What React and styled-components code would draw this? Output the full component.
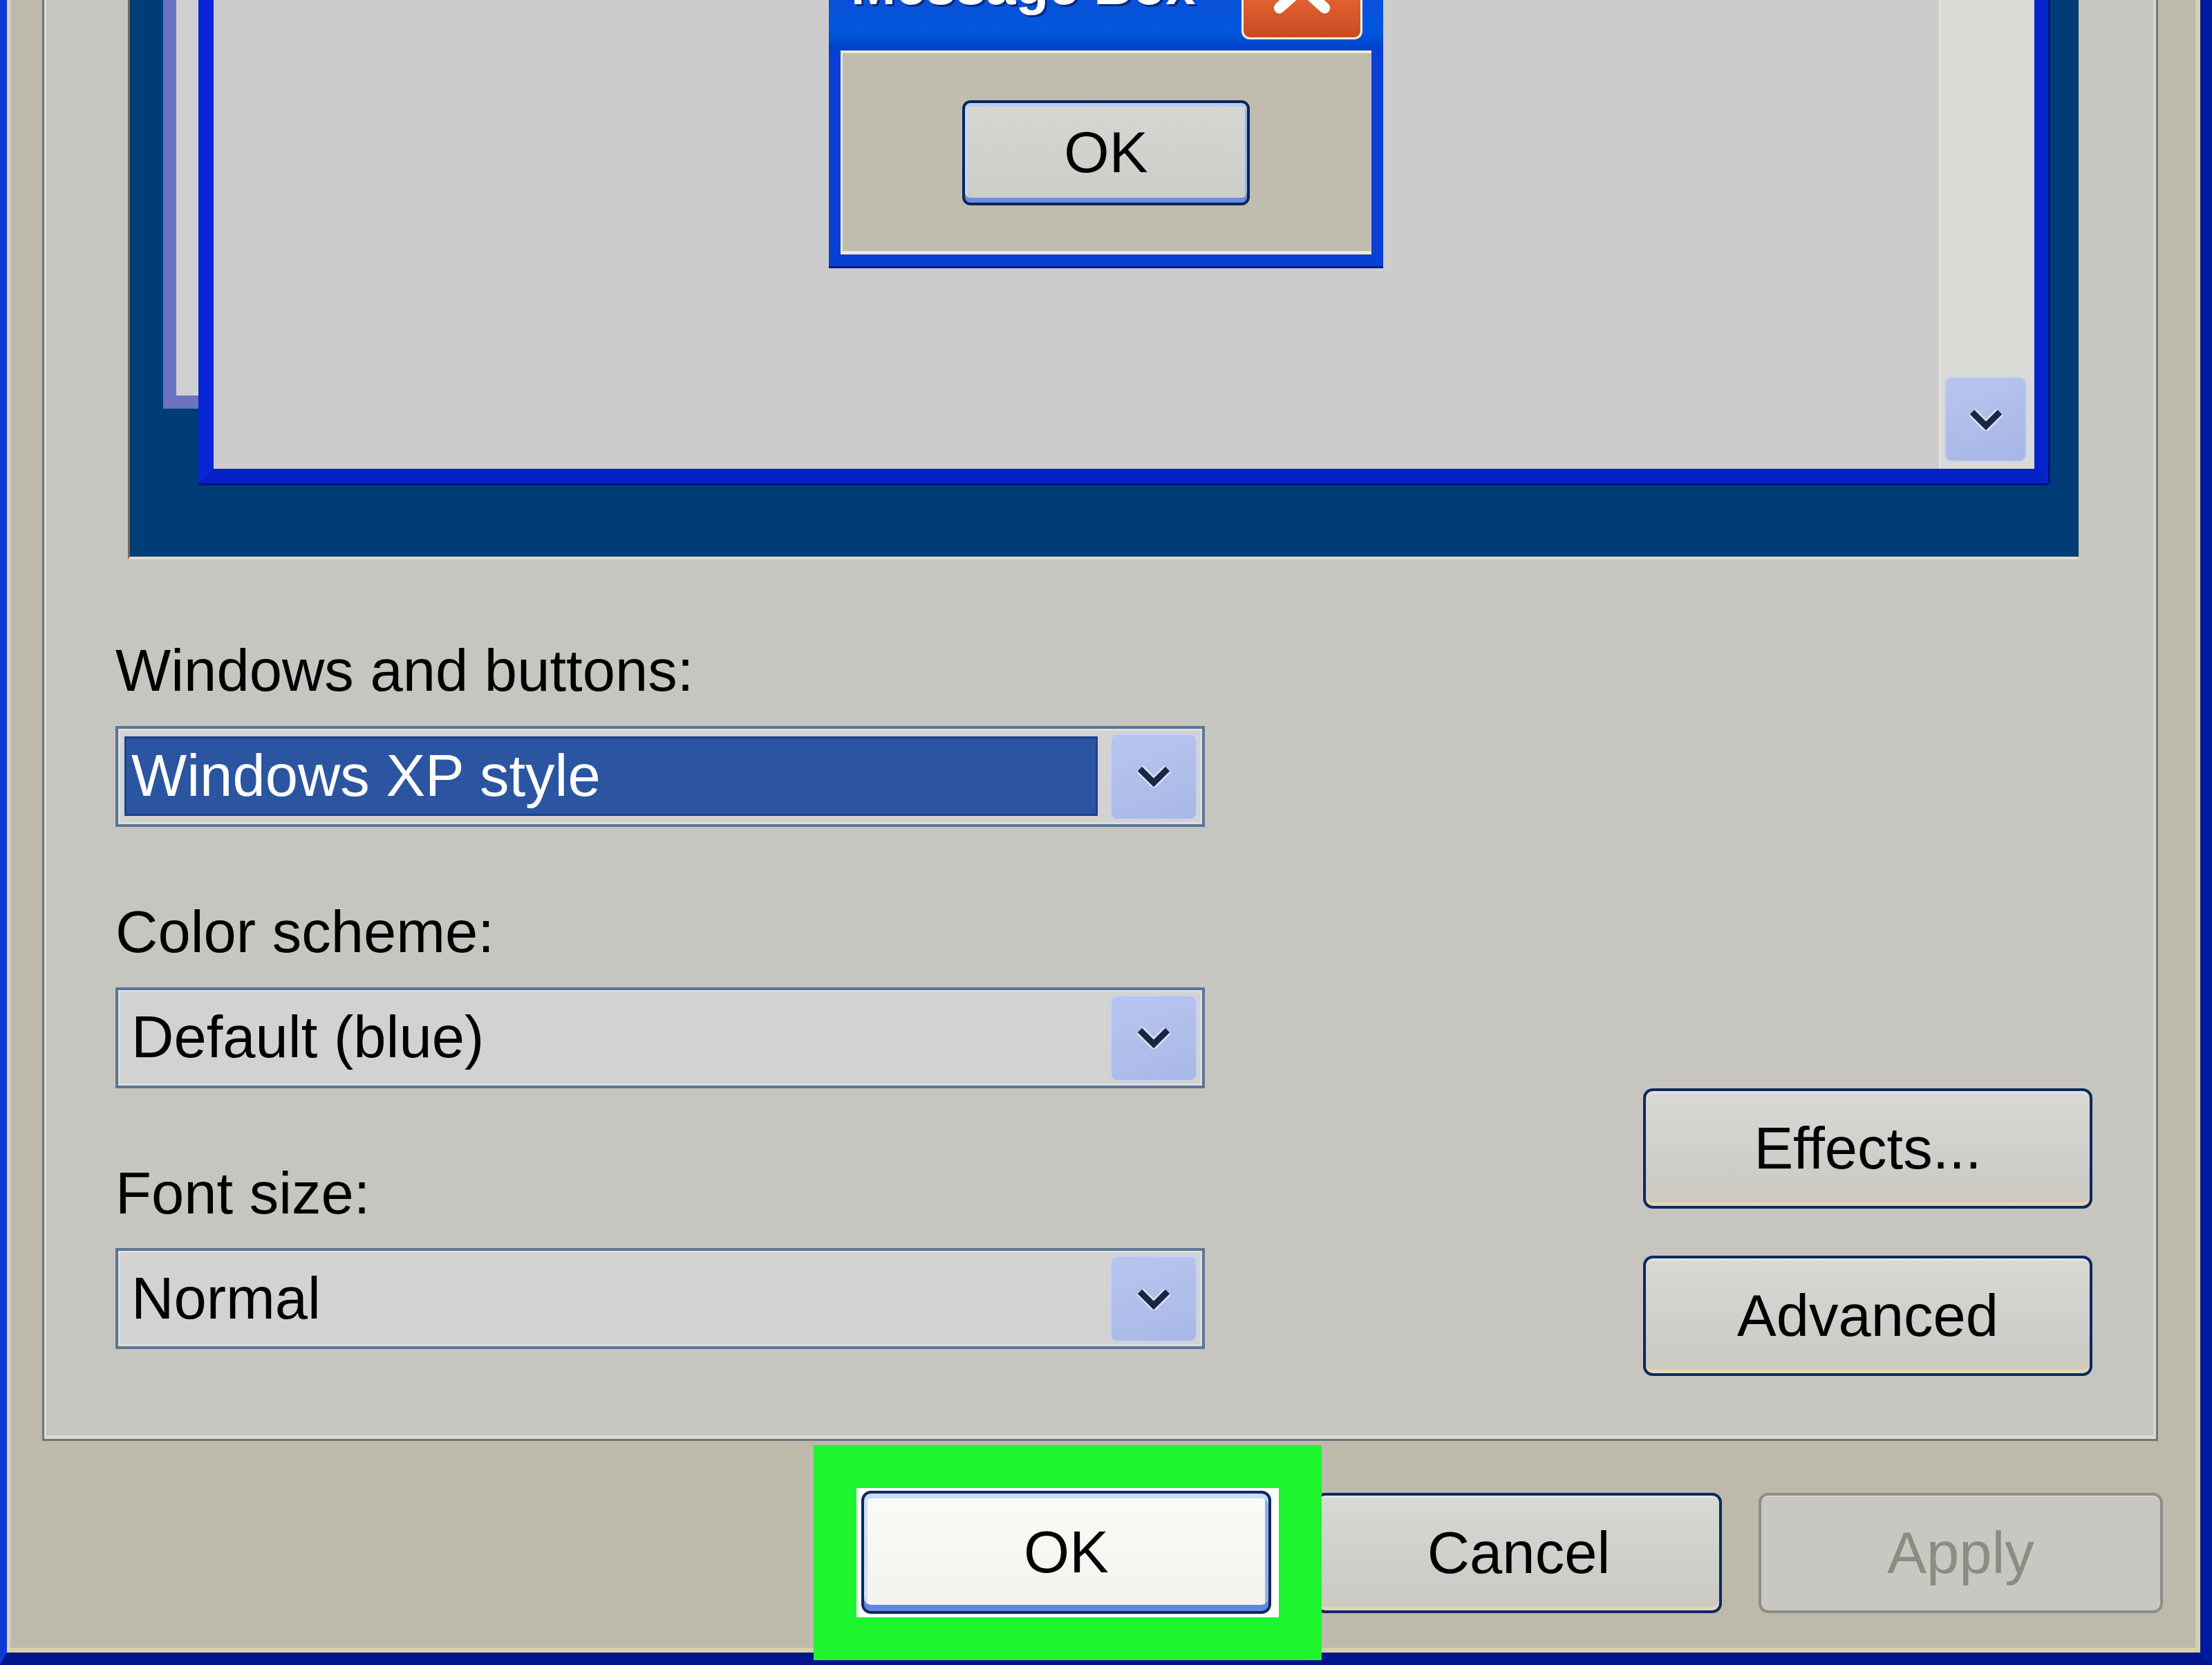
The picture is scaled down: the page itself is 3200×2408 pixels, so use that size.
import React from 'react'
import styled, { createGlobalStyle } from 'styled-components'

const Global = createGlobalStyle`
html, body {
	margin: 0;
	padding: 0;
	overflow: hidden;
	background: #0b3bd0;
}
* { box-sizing: border-box; }
`

const FONT = `"Liberation Sans", Arial, sans-serif`

const Chevron = () => (
	<svg width="50" height="32" viewBox="0 0 50 32">
		<polyline points="5,5 25,25 45,5" fill="none" stroke="#eef2ff" strokeOpacity="0.7" strokeWidth="14" strokeLinejoin="miter" />
		<polyline points="5,5 25,25 45,5" fill="none" stroke="#1a2646" strokeWidth="9" strokeLinejoin="miter" />
	</svg>
)

const App = () => {
	return (
		<>
			<Global />
			<Frame>
				<Body>
					<Panel>
						<Preview>
							<BackWindow />
							<MainWindow>
								<WindowContent>
									<MessageBox>
										<TitleBar>
											<Title>Message Box</Title>
											<CloseBtn>
												<svg width="100%" height="100%" viewBox="0 0 175 57">
													<line x1="40" y1="-62" x2="122" y2="12" stroke="#fff" strokeWidth="17" strokeLinecap="round" />
													<line x1="135" y1="-62" x2="53" y2="12" stroke="#fff" strokeWidth="17" strokeLinecap="round" />
												</svg>
											</CloseBtn>
										</TitleBar>
										<MessageBody>
											<SmallButton>OK</SmallButton>
										</MessageBody>
									</MessageBox>
								</WindowContent>
								<ScrollTrack>
									<ScrollButton><Chevron /></ScrollButton>
								</ScrollTrack>
							</MainWindow>
						</Preview>
						<Controls>
							<Fields>
								<Group>
									<Label>Windows and buttons:</Label>
									<Combo>
										<Field selected>Windows XP style</Field>
										<DropButton><Chevron /></DropButton>
									</Combo>
								</Group>
								<Group>
									<Label>Color scheme:</Label>
									<Combo>
										<Field>Default (blue)</Field>
										<DropButton><Chevron /></DropButton>
									</Combo>
								</Group>
								<Group>
									<Label>Font size:</Label>
									<Combo>
										<Field>Normal</Field>
										<DropButton><Chevron /></DropButton>
									</Combo>
								</Group>
							</Fields>
							<SideButtons>
								<XPButton>Effects...</XPButton>
								<XPButton>Advanced</XPButton>
							</SideButtons>
						</Controls>
					</Panel>
					<Footer>
						<Highlight>
							<XPButton primary>OK</XPButton>
						</Highlight>
						<XPButton width={588}>Cancel</XPButton>
						<XPButton disabled width={585}>Apply</XPButton>
					</Footer>
				</Body>
			</Frame>
		</>
	)
}

const Frame = styled.div`
width: 3200px;
height: 2408px;
border-left: 10px solid #0b3bd0;
border-right: 17px solid #001c9e;
border-bottom: 18px solid #00168a;
font-family: ${FONT};
`

const Body = styled.div`
height: 100%;
background: #bdb9ab;
box-shadow: inset 5px 0 0 #d9d5b8, inset -7px 0 0 #d6d1ac, inset 0 -7px 0 #d6d1ac;
display: flex;
flex-direction: column;
`

const Panel = styled.div`
margin: 0 61px 0 51px;
background: #c6c5c0;
border-left: 3px solid #6f767b;
border-right: 3px solid #6f767b;
border-bottom: 3px solid #6f767b;
box-shadow: inset 0 -5px 0 #d9d9d4, inset -4px 0 0 #d9d9d4, inset 3px 0 0 #dcdcd6;
`

const Preview = styled.div`
margin: 0 112px 0 121px;
height: 809px;
background: #003c78;
border-left: 3px solid #7a6a4e;
border-bottom: 4px solid #dddbd2;
display: flex;
align-items: flex-start;
padding-right: 44px;
`

const BackWindow = styled.div`
margin-left: 48px;
width: 51px;
height: 591px;
background: #d0d0d0;
border-left: 19px solid #6a72c2;
border-bottom: 19px solid #6a72c2;
`

const MainWindow = styled.div`
flex: 1;
height: 699px;
display: flex;
border-left: 22px solid #0726d6;
border-right: 20px solid #0524cc;
border-bottom: 21px solid #0420c6;
box-shadow: 0 3px 0 #00107a, 3px 0 0 #00107a;
`

const WindowContent = styled.div`
flex: 1;
background: #cccccc;
padding-left: 890px;
`

const MessageBox = styled.div`
width: 802px;
border: 17px solid #0a3fd4;
border-top: 0;
box-shadow: 0 3px 0 #001a8a;
`

const TitleBar = styled.div`
height: 73px;
margin: 0 -17px;
padding: 0 30px 0 32px;
background: linear-gradient(180deg, #0a50d8 0%, #0058dc 60%, #0040c8 100%);
display: flex;
align-items: flex-start;
justify-content: space-between;
overflow: hidden;
`

const Title = styled.div`
color: #fff;
font-weight: bold;
font-size: 78px;
line-height: 1;
margin-top: -60px;
text-shadow: 3px 3px 0 #0a2a80;
white-space: nowrap;
`

const CloseBtn = styled.div`
width: 175px;
height: 57px;
background: linear-gradient(180deg, #e06030 0%, #c84c22 100%);
border: 3px solid #f4f0e8;
border-top: 0;
border-radius: 0 0 12px 12px;
overflow: hidden;
`

const MessageBody = styled.div`
height: 295px;
background: #c0bdb0;
box-shadow: inset 0 4px 0 #ede9d2, inset 0 -5px 0 #ede9d2, inset 3px 0 0 #ede9d2;
display: flex;
align-items: center;
justify-content: center;
`

const SmallButton = styled.div`
width: 416px;
height: 152px;
border: 4px solid #0b2457;
border-radius: 12px;
background: linear-gradient(180deg, #d6d6d2 0%, #ccccc8 100%);
box-shadow: inset 0 5px 0 #b4ccf2, inset 0 -7px 0 #6a8ce4, inset 3px 0 0 #c6d8f4, inset -3px 0 0 #9ab4ec;
display: flex;
align-items: center;
justify-content: center;
font-size: 84px;
color: #000;
`

const ScrollTrack = styled.div`
width: 138px;
background: #d9d9d5;
border-left: 2px solid #e6e6e2;
display: flex;
flex-direction: column;
justify-content: flex-end;
padding: 0 0 10px 6px;
`

const ScrollButton = styled.div`
width: 119px;
height: 123px;
border-radius: 10px;
background: linear-gradient(160deg, #b8c6ee 0%, #a6b6e4 100%);
border: 2px solid #c4d0f2;
display: flex;
align-items: center;
justify-content: center;
`

const Controls = styled.div`
display: flex;
justify-content: space-between;
align-items: flex-start;
padding: 112px 92px 91px 103px;
`

const Fields = styled.div`
width: 1576px;
display: flex;
flex-direction: column;
gap: 103px;
`

const Group = styled.div`
display: flex;
flex-direction: column;
gap: 31px;
`

const Label = styled.div`
font-size: 85px;
line-height: 1.15;
color: #000;
white-space: nowrap;
`

const Combo = styled.div`
height: 146px;
border: 4px solid #5a7596;
background: #d2d2d0;
box-shadow: inset 0 0 0 3px #dedede;
display: flex;
padding: 7px 7px 6px 9px;
gap: 18px;
`

const Field = styled.div`
flex: 1;
margin: 4px 0 6px 0;
padding-left: 7px;
display: flex;
align-items: center;
font-size: 85px;
white-space: nowrap;
color: ${p => p.selected ? '#fff' : '#000'};
background: ${p => p.selected ? '#2b55a0' : 'transparent'};
border: 3px solid ${p => p.selected ? '#1a3e94' : 'transparent'};
`

const DropButton = styled.div`
width: 126px;
border-radius: 10px;
background: linear-gradient(160deg, #b8c6ee 0%, #a8b8e6 100%);
border: 2px solid #c6d2f2;
display: flex;
align-items: center;
justify-content: center;
`

const SideButtons = styled.div`
padding-top: 653px;
display: flex;
flex-direction: column;
gap: 68px;
`

const XPButton = styled.div`
width: ${p => p.width || (p.primary ? 593 : 650)}px;
height: ${p => p.primary ? 178 : 174}px;
border: 4px solid ${p => p.disabled ? '#8f8e86' : '#0c2a5e'};
border-radius: 14px;
background: ${p => p.primary
		? 'linear-gradient(180deg, #fbfbf8 0%, #f2f2ee 100%)'
		: p.disabled
			? '#c8c7c1'
			: 'linear-gradient(180deg, #d8d8d4 0%, #cbcbc7 80%, #cfc9bb 100%)'};
box-shadow: ${p => p.primary
		? 'inset 0 7px 0 #c6dcf8, inset 0 -9px 0 #5f86e0, inset 5px 0 0 #cfe0f8, inset -5px 0 0 #8fb0ee'
		: p.disabled
			? 'inset 0 2px 0 #d8d8d2'
			: 'inset 0 3px 0 #e4e4e0, inset 0 -5px 0 #e2d6bc'};
display: flex;
align-items: center;
justify-content: center;
font-size: 85px;
color: ${p => p.disabled ? '#8d8c84' : '#000'};
white-space: nowrap;
`

const Footer = styled.div`
display: flex;
justify-content: flex-end;
align-items: center;
gap: 53px;
padding: 68px 54px 52px 0;
`

const Highlight = styled.div`
position: relative;
z-index: 1;
padding: 4px 11px 5px 7px;
background: #ffffff;
outline: 62px solid #1ef52e;
`

export default App
